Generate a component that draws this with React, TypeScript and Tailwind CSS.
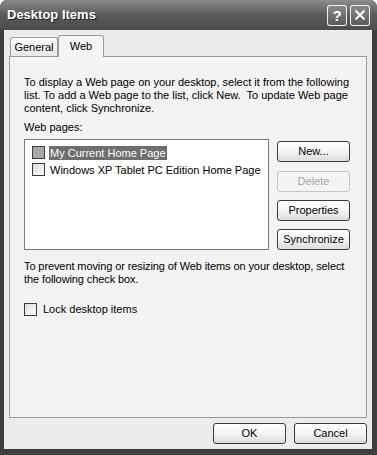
import React, { useState } from 'react';

const font = { fontFamily: '"Liberation Sans", Arial, sans-serif' };

const XpButton: React.FC<{ label: string; disabled?: boolean; className?: string }> = ({ label, disabled, className }) => (
  <button
    disabled={disabled}
    className={`h-[21px] rounded-[3px] border text-[11px] leading-none flex items-center justify-center ${
      disabled
        ? 'border-[#c4c4c4] bg-[#f4f4f4] text-[#a8a8a8]'
        : 'border-[#3a3a3a] bg-gradient-to-b from-white via-[#f4f4f4] to-[#dcdcdc] text-black'
    } ${className || ''}`}
  >
    {label}
  </button>
);

const CheckBox: React.FC<{ shaded?: boolean }> = ({ shaded }) => (
  <span
    className={`block w-[13px] h-[13px] border border-[#3c3c3c] shrink-0 ${
      shaded ? 'bg-[#a8a8a8]' : 'bg-gradient-to-br from-[#dcdcdc] to-white'
    }`}
  />
);

const App: React.FC = () => {
  const [selected, setSelected] = useState(0);
  const pages = ['My Current Home Page', 'Windows XP Tablet PC Edition Home Page'];

  return (
    <div className="w-[377px] h-[455px] bg-[#3e3e3e] rounded-t-[7px] flex flex-col overflow-hidden" style={font}>
      {/* title bar */}
      <div className="h-[30px] shrink-0 flex items-center justify-between pl-[7px] pr-[7px] bg-gradient-to-b from-[#8c8c8c] via-[#5a5a5a] to-[#4c4c4c] rounded-t-[7px]">
        <span className="text-white font-bold text-[13px] [text-shadow:1px_1px_0_#222]">Desktop Items</span>
        <div className="flex gap-[3px]">
          <div className="w-[20px] h-[21px] rounded-[3px] border border-white/90 bg-gradient-to-b from-[#8a8a8a] to-[#5a5a5a] flex items-center justify-center text-white font-bold text-[15px] leading-none">
            ?
          </div>
          <div className="w-[20px] h-[21px] rounded-[3px] border border-white/90 bg-gradient-to-b from-[#8a8a8a] to-[#5a5a5a] flex items-center justify-center">
            <svg width="12" height="12" viewBox="0 0 12 12">
              <path d="M1.5 1.5 L10.5 10.5 M10.5 1.5 L1.5 10.5" stroke="white" strokeWidth="2" />
            </svg>
          </div>
        </div>
      </div>

      {/* body */}
      <div className="flex-1 mx-[4px] mr-[5px] bg-[#ececec] flex flex-col px-[5px] pt-[4px]">
        {/* tabs */}
        <div className="flex items-end h-[22px] pl-[1px] relative z-10">
          <div className="h-[19px] w-[48px] border border-b-0 border-[#9a9a9a] rounded-t-[3px] bg-gradient-to-b from-white to-[#e8e8e8] text-[11px] flex items-center justify-center">
            General
          </div>
          <div className="h-[22px] w-[46px] border border-b-0 border-[#9a9a9a] rounded-t-[3px] bg-[#f4f4f4] text-[11px] flex items-start justify-center pt-[2px] -mb-[1px]">
            Web
          </div>
        </div>

        {/* panel */}
        <div className="h-[362px] border border-[#9a9a9a] bg-[#f3f3f3] pl-[14px] pr-[8px] pt-[19px] text-[11px] leading-[13px] text-black">
          <p className="pr-[8px]">
            To display a Web page on your desktop, select it from the following list. To add a Web page to the list, click New.&nbsp; To update Web page content, click Synchronize.
          </p>
          <p className="mt-[6px]">Web pages:</p>
          <div className="mt-[5px] flex">
            <div className="w-[245px] h-[111px] border border-[#7a7a7a] bg-white pt-[4px] pl-[7px]">
              {pages.map((p, i) => (
                <div key={p} className="flex items-center h-[17px]" onClick={() => setSelected(i)}>
                  <CheckBox shaded={i === 0} />
                  <span
                    className={`ml-[4px] px-[1px] h-[14px] leading-[14px] ${
                      i === selected ? 'bg-[#6e6e6e] text-white' : ''
                    }`}
                  >
                    {p}
                  </span>
                </div>
              ))}
            </div>
            <div className="ml-[8px] pt-[2px] flex flex-col w-[73px]">
              <XpButton label="New..." />
              <XpButton label="Delete" disabled className="mt-[9px]" />
              <XpButton label="Properties" className="mt-[8px]" />
              <XpButton label="Synchronize" className="mt-[8px]" />
            </div>
          </div>
          <p className="mt-[10px] tracking-[-0.1px]">
            To prevent moving or resizing of Web items on your desktop, select the following check box.
          </p>
          <label className="mt-[17px] flex items-center">
            <CheckBox />
            <span className="ml-[6px]">Lock desktop items</span>
          </label>
        </div>

        {/* footer buttons */}
        <div className="flex justify-end gap-[8px] mt-[5px]">
          <XpButton label="OK" className="w-[73px]" />
          <XpButton label="Cancel" className="w-[73px]" />
        </div>
      </div>
      <div className="h-[6px] shrink-0" />
    </div>
  );
};

export default App;
